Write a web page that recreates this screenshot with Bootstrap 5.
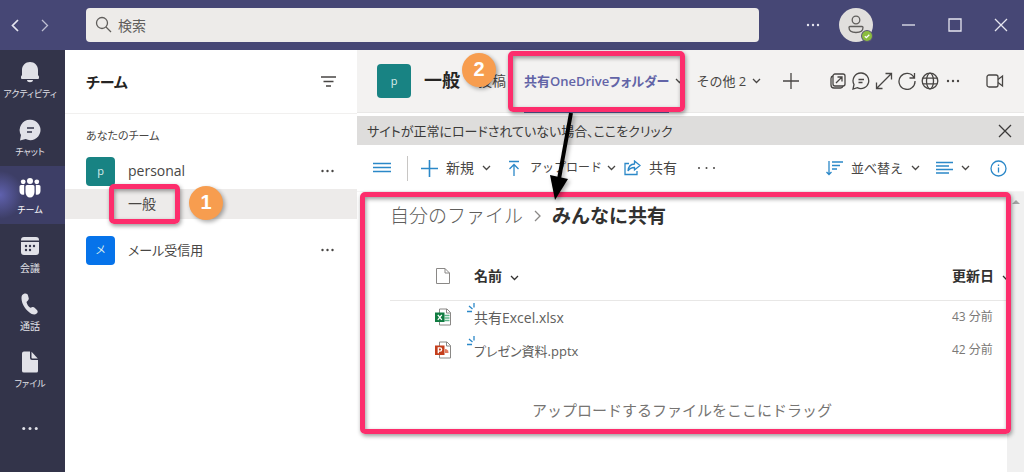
<!DOCTYPE html>
<html lang="ja">
<head>
<meta charset="utf-8">
<meta name="viewport" content="width=device-width, initial-scale=1">
<title>チーム</title>
<link href="https://cdn.jsdelivr.net/npm/bootstrap@5.3.0/dist/css/bootstrap.min.css" rel="stylesheet">
<style>
  body { font-family: "Open Sans", "Noto Sans CJK JP", sans-serif; font-size: 14px; line-height: 20px; color: #484644; background: #fff; font-feature-settings: "palt"; }
  svg { display: block; fill: none; stroke: currentColor; stroke-width: 1.3; flex: none; }
  .plain-btn { border: 0; background: none; padding: 0; color: inherit; display: flex; align-items: center; white-space: nowrap; }
  .dots { fill: currentColor; stroke: none; }
  .text-13 { font-size: 13px; }
  .text-12 { font-size: 12px; }

  .app-top { height: 50px; background: #464775; color: #e6e6f0; padding-left: 8px; }
  .top-btn { width: 30px; height: 30px; justify-content: center; }
  .back-btn { width: 14px; }
  .more-btn { margin-left: 39px; }
  .user-btn { margin: 0 12px 0 10px; }
  .win-btn { width: 46px; height: 50px; justify-content: center; }
  .search-wrap { margin-left: 26px; }
  .search-wrap svg { position: absolute; left: 9px; top: 8px; color: #605e5c; }
  .search-box { height: 34px; border: 0; border-radius: 4px; background: #edebe9; padding: 0 12px 0 32px; font-size: 14px; width: 100%; }
  .search-box::placeholder { color: #605e5c; opacity: 1; }

  .rail { width: 65px; background: #33344a; }
  .rail a { height: 58px; padding: 11px 5px 0 0; color: #e1e1e8; text-decoration: none; font-size: 10px; line-height: 16px; gap: 3px; white-space: nowrap; }
  .rail .kana { font-size: 9px; }
  .rail svg { fill: currentColor; stroke: none; }
  .rail a.active { color: #fff; background: radial-gradient(circle at left, #5f61ae 0, #3d3e66 24px); }

  .side { width: 292px; }
  .side-head { height: 64px; padding: 0 20px 0 21px; border-bottom: 1px solid #f1f0ef; }
  .side-head h1 { font-size: 15px; font-weight: 700; color: #252423; }
  .side-label { font-size: 11px; padding: 12px 21px 10px; }
  .team-row { height: 30px; padding: 0 22px 0 21px; }
  .tile { width: 29px; height: 29px; border-radius: 4px; background: #188383; color: #d8ecec; font-size: 11px; display: flex; align-items: center; justify-content: center; flex: none; }
  .tile-blue { background: #0673ea; }
  .tile-lg { width: 34px; height: 34px; }
  .team-row .tile { margin-right: 13px; }
  .channel { height: 30px; background: #edebea; padding-left: 63px; margin: 3px 0 16px; }
  .channel a, .tabs a { color: inherit; text-decoration: none; white-space: nowrap; }

  .mark-box { position: absolute; border: 5px solid #fd2d6c; border-radius: 5px; box-shadow: 1px 2px 4px #0006, inset 1px 2px 4px #0006; pointer-events: none; z-index: 3; }
  .mark-channel { inset: -10px -24px -10px -19px; }
  .mark-tab { inset: 1px -16px 1px -16px; }
  .mark-files { inset: 0 13px auto 3px; height: 242px; }
  .step { position: absolute; width: 34px; height: 34px; border-radius: 50%; background: #f79d4f; color: #fff; font-family: "Liberation Sans", sans-serif; font-size: 20px; font-weight: 700; line-height: 33px; text-align: center; box-shadow: 2px 2px 4px #0005; z-index: 4; }
  .step-one { left: 61px; top: -8px; }
  .step-two { left: -16px; top: 3px; }
  .pointer { position: absolute; left: 20px; top: 61px; z-index: 5; filter: drop-shadow(2px 2px 2px #0005); }

  .main-head { height: 63px; background: #f3f2f1; padding: 0 19px 0 20px; border-bottom: 1px solid #e9e8e7; }
  .main-head h2 { font-size: 18px; font-weight: 700; color: #252423; margin-left: 13px; }
  .tabs { height: 63px; margin-left: 18px; gap: 18px; }
  .tabs li { display: flex; align-items: center; position: relative; }
  .tabs .current { color: #6264a7; font-weight: 600; font-size: 13px; }
  .tabs .current::after { content: ""; position: absolute; left: 0; right: 0; bottom: 0; height: 2px; background: #6264a7; }
  .tab-menu { margin: 0 12px 0 6px; }
  .tab-more { gap: 6px; margin-right: 22px; }
  .tool-set { gap: 5px; }
  .meet-btn { margin-left: 19px; }
  .notice { height: 29px; background: #dedddc; padding: 0 12px 0 10px; margin-top: 3px; color: #3b3a39; }
  .cmd-bar { height: 47px; padding: 0 17px 0 16px; border-bottom: 1px solid #f5f4f4; }
  .cmd-bar .blue { color: #2b88c8; }
  .cmd-bar button { gap: 8px; }
  .cmd-bar .btn-tight { gap: 5px; }
  .space-16 { margin-left: 16px; }
  .space-20 { margin-left: 20px; }
  .rule-v { width: 1px; height: 25px; background: #c8c6c4; margin: 0 13px 0 16px; }

  .files { padding: 12px 17px 12px 33px; }
  .crumbs { gap: 10px; font-size: 19px; line-height: 24px; font-feature-settings: normal; }
  .crumbs a { color: #605e5c; font-weight: 300; text-decoration: none; }
  .crumbs svg { color: #8a8886; }
  .crumbs strong { color: #323130; }
  .file-table { width: 100%; table-layout: fixed; margin-top: 25px; }
  .file-table th { height: 47px; padding: 0; color: #323130; font-weight: 600; border-bottom: 1px solid #e8e7e6; white-space: nowrap; overflow: hidden; }
  .file-table th .sheet { color: #8a8886; stroke-width: 1; }
  .file-table td { height: 33px; padding: 0; white-space: nowrap; }
  .col-kind { width: 84px; }
  .col-date { width: 55px; }
  .file-table .kind { padding-left: 44px; }
  .file-link { display: inline-block; color: #605e5c; text-decoration: none; padding-top: 2px; }
  .file-link svg { position: absolute; left: -8px; top: -3px; color: #2b88c8; }
  .file-table .date { font-size: 12px; color: #7a7876; }
  .drop-hint { font-size: 15px; color: #767472; text-align: center; margin: 34px 0 0; padding-right: 33px; font-feature-settings: normal; }
  .scroll-track { position: absolute; right: 0; top: 0; bottom: 0; width: 17px; background: #f0f0f0; padding: 8px 0 0 5px; color: #a3a3a3; }
</style>
</head>
<body class="d-flex flex-column min-vh-100">
<svg width="0" height="0" class="position-absolute">
  <symbol id="dots" viewBox="0 0 14 4"><circle cx="2" cy="2" r="1.2"/><circle cx="7" cy="2" r="1.2"/><circle cx="12" cy="2" r="1.2"/></symbol>
  <symbol id="chev" viewBox="0 0 9 6"><path d="M1 1l3.500 3.500L8 1"/></symbol>
</svg>

<header class="app-top d-flex align-items-center">
  <button class="plain-btn top-btn back-btn" aria-label="戻る"><svg width="8" height="13" viewBox="0 0 8 13"><path d="M7 1L1.500 6.500 7 12" stroke-width="1.700"/></svg></button>
  <button class="plain-btn top-btn ms-2" aria-label="進む"><svg class="opacity-75" width="8" height="13" viewBox="0 0 8 13"><path d="M1 1l5.500 5.500L1 12"/></svg></button>
  <label class="search-wrap position-relative flex-grow-1">
    <svg width="17" height="17" viewBox="0 0 17 17"><circle cx="7" cy="7" r="5.500"/><path d="M11 11l5 5"/></svg>
    <input class="search-box" type="search" placeholder="検索" aria-label="検索">
  </label>
  <button class="plain-btn top-btn more-btn" aria-label="設定など"><svg class="dots" width="14" height="4"><use href="#dots"/></svg></button>
  <button class="plain-btn user-btn" aria-label="アカウント">
    <svg width="36" height="36" viewBox="0 0 36 36"><circle cx="18" cy="18" r="17" fill="#e1dfdd" stroke="none"/><g stroke="#605e5c"><circle cx="18" cy="13" r="3.800"/><path d="M12 19.500h12q1 0 1 1c0 3.500-3 5-7 5s-7-1.500-7-5q0-1 1-1z"/></g><circle cx="29" cy="29" r="6" fill="#5b5a73" stroke="none"/><circle cx="29" cy="29" r="5" fill="#8bbd3f" stroke="none"/><path d="M26.800 29.200l1.600 1.500 2.900-3" stroke="#fff"/></svg>
  </button>
  <button class="plain-btn win-btn" aria-label="最小化"><svg width="14" height="14" viewBox="0 0 14 14"><path d="M0 7h13"/></svg></button>
  <button class="plain-btn win-btn" aria-label="最大化"><svg width="14" height="14" viewBox="0 0 14 14"><path d="M1 1h12v12H1z"/></svg></button>
  <button class="plain-btn win-btn" aria-label="閉じる"><svg width="14" height="14" viewBox="0 0 14 14"><path d="M1 1l12 12M13 1L1 13"/></svg></button>
</header>

<div class="d-flex flex-grow-1">
  <nav class="rail d-flex flex-column flex-shrink-0">
    <a href="#" class="kana d-flex flex-column align-items-center"><svg width="22" height="22" viewBox="0 0 22 22"><path d="M2 17v-1.500l1-1.500V9c0-4.500 3.500-8 8-8s8 3.500 8 8v5l1 1.500V17q0 1-1 1H3q-1 0-1-1zM8 19h6c0 1.500-1.500 2.200-3 2.200S8 20.500 8 19z"/></svg>アクティビティ</a>
    <a href="#" class="kana d-flex flex-column align-items-center"><svg width="22" height="22" viewBox="0 0 22 22"><path d="M11.300.8a10.200 10.200 0 1 1-4.600 19.300L1 21.500l1-5.500A10.200 10.200 0 0 1 11.300.8z"/><path d="M8 9h7M8 13h5" stroke="#33344a" stroke-width="1.500"/></svg>チャット</a>
    <a href="#" class="kana active d-flex flex-column align-items-center"><svg width="22" height="22" viewBox="0 0 22 22"><circle cx="11" cy="4" r="3"/><circle cx="4.200" cy="4.800" r="2.400"/><circle cx="17.800" cy="4.800" r="2.400"/><path d="M6.500 9.500q0-1.500 1.500-1.500h6q1.500 0 1.500 1.500V15a4.500 5.500 0 0 1-9 0zM.500 9.500Q.500 8 2 8h3.200v9.500C3 18.500.500 17 .500 14zM21.500 9.500Q21.500 8 20 8h-3.200v9.500c2.200 1 4.700-.500 4.700-3.500z"/></svg>チーム</a>
    <a href="#" class="d-flex flex-column align-items-center"><svg width="22" height="22" viewBox="0 0 22 22"><path d="M2 5q0-3 3-3h12q3 0 3 3v.500H2zM2 7h18v10q0 3-3 3H5q-3 0-3-3z"/><g fill="#33344a"><circle cx="7" cy="11" r="1.200"/><circle cx="11" cy="11" r="1.200"/><circle cx="15" cy="11" r="1.200"/><circle cx="7" cy="15" r="1.200"/><circle cx="11" cy="15" r="1.200"/></g></svg>会議</a>
    <a href="#" class="d-flex flex-column align-items-center"><svg width="22" height="22" viewBox="0 0 22 22"><path d="M5 .800c2-.800 3.500 0 4 1.600l.700 2.600c.3 1.200-.2 2-1 2.700L7.500 9c.5 2.500 2 4.700 3.800 5.800l1.600-.600c1.200-.400 2.200 0 3 .700l2 2c1.100 1.200 1 2.600-.2 3.600-2 1.600-4.700 1-7.500-1.300C5.500 15.500 2.700 10.500 2.500 5.500 2.400 3 3 1.600 5 .800z"/></svg>通話</a>
    <a href="#" class="kana d-flex flex-column align-items-center"><svg width="22" height="22" viewBox="0 0 22 22"><path d="M5 .500h6V7q0 2 2 2h6v11q0 1.500-1.500 1.500H5Q3 21.500 3 20V2.500q0-2 2-2z"/><path d="M12.500.800L18.800 7.500h-5.300q-1 0-1-1z"/></svg>ファイル</a>
    <a href="#" class="d-flex flex-column align-items-center pt-4" aria-label="その他"><svg class="mt-1" width="18" height="5"><use href="#dots"/></svg></a>
  </nav>

  <aside class="side flex-shrink-0">
    <div class="side-head d-flex align-items-center justify-content-between">
      <h1 class="m-0">チーム</h1>
      <button class="plain-btn" aria-label="フィルター"><svg width="18" height="14" viewBox="0 0 18 14"><path d="M2 2h15M4.500 6.500h10M7 11h5"/></svg></button>
    </div>
    <div class="side-label">あなたのチーム</div>
    <div class="team-row d-flex align-items-center"><span class="tile">p</span>personal
      <button class="plain-btn ms-auto" aria-label="personal のその他"><svg class="dots" width="15" height="4"><use href="#dots"/></svg></button></div>
    <div class="channel d-flex align-items-center">
      <span class="position-relative"><a href="#">一般</a><span class="mark-box mark-channel"></span><span class="step step-one">1</span></span>
    </div>
    <div class="team-row d-flex align-items-center text-13"><span class="tile tile-blue">メ</span>メール受信用
      <button class="plain-btn ms-auto" aria-label="メール受信用のその他"><svg class="dots" width="15" height="4"><use href="#dots"/></svg></button></div>
  </aside>

  <main class="flex-grow-1 d-flex flex-column">
    <div class="main-head d-flex align-items-center">
      <span class="tile tile-lg">p</span>
      <h2 class="mb-0 text-nowrap">一般</h2>
      <ul class="tabs list-unstyled d-flex mb-0">
        <li><a href="#">投稿</a><span class="step step-two">2</span></li>
        <li class="current"><a href="#">共有OneDriveフォルダー</a>
          <span class="mark-box mark-tab"></span>
          <svg class="pointer" width="40" height="90" viewBox="0 0 40 90"><path d="M27 2L15 68" stroke="#000" stroke-width="4"/><path d="M11 89L6 64l18 4z" fill="#000" stroke="none"/></svg></li>
      </ul>
      <button class="plain-btn tab-menu" aria-label="タブのメニュー"><svg width="9" height="6"><use href="#chev"/></svg></button>
      <button class="plain-btn tab-more text-13">その他 2<svg width="9" height="6"><use href="#chev"/></svg></button>
      <button class="plain-btn" aria-label="タブを追加"><svg width="16" height="16" viewBox="0 0 16 16"><path d="M8 0v16M0 8h16"/></svg></button>
      <div class="tool-set d-flex align-items-center ms-auto">
        <button class="plain-btn" aria-label="ポップアウト"><svg width="18" height="18" viewBox="0 0 18 18"><rect x="4" y="2" width="12" height="12" rx="2"/><path d="M4 4Q2 4.500 2 6.500V13q0 3 3 3h6.500q2 0 2.500-2M7 11l6-6M8.500 5H13v4.500"/></svg></button>
        <button class="plain-btn" aria-label="会話"><svg width="18" height="18" viewBox="0 0 18 18"><path d="M9.300 1a7.800 7.800 0 1 1-4 14.700L1 17l1-4.500A7.800 7.800 0 0 1 9.300 1zM6.500 7.500H12M6.500 10.500h4"/></svg></button>
        <button class="plain-btn" aria-label="展開"><svg width="18" height="18" viewBox="0 0 18 18"><path d="M2 16L16 2M10.500 1.500h6v6M1.500 10.500v6h6"/></svg></button>
        <button class="plain-btn" aria-label="再読み込み"><svg width="18" height="18" viewBox="0 0 18 18"><path d="M16 5.500A8 8 0 1 0 17 9M16.500 1v5h-5"/></svg></button>
        <button class="plain-btn" aria-label="Web サイト"><svg width="18" height="18" viewBox="0 0 18 18"><circle cx="9" cy="9" r="7.800"/><ellipse cx="9" cy="9" rx="3.500" ry="7.800"/><path d="M2 6.200h14M2 11.800h14"/></svg></button>
        <button class="plain-btn" aria-label="その他"><svg class="dots" width="18" height="4"><use href="#dots"/></svg></button>
        <button class="plain-btn meet-btn" aria-label="会議"><svg width="19" height="16" viewBox="0 0 19 16"><rect x="1" y="2" width="11" height="12" rx="2"/><path d="M12 6.500L16.500 3v10L12 9.500"/></svg></button>
      </div>
    </div>

    <div class="notice d-flex align-items-center justify-content-between">
      <span class="text-13">サイトが正常にロードされていない場合、ここをクリック</span>
      <button class="plain-btn" aria-label="閉じる"><svg width="14" height="14" viewBox="0 0 14 14"><path d="M1 1l12 12M13 1L1 13"/></svg></button>
    </div>

    <div class="cmd-bar d-flex align-items-center">
      <button class="plain-btn" aria-label="メニュー"><svg class="blue" width="18" height="12" viewBox="0 0 18 12"><path d="M0 1.500h18M0 5.500h18M0 9.500h18"/></svg></button>
      <span class="rule-v"></span>
      <button class="plain-btn"><svg class="blue" width="17" height="17" viewBox="0 0 17 17"><path d="M8.500 0v17M0 8.500h17" stroke-width="1.600"/></svg>新規<svg width="9" height="6"><use href="#chev"/></svg></button>
      <button class="plain-btn btn-tight space-16 text-12"><svg class="blue me-1" width="14" height="17" viewBox="0 0 14 17"><path d="M2 1.500h10M7 16V4.500M2.500 9L7 4.500 11.500 9"/></svg>アップロード<svg width="9" height="6"><use href="#chev"/></svg></button>
      <button class="plain-btn ms-2"><svg class="blue" width="17" height="16" viewBox="0 0 17 16"><path d="M5 3.500H1v11h12V11M10.500 1l5.500 4.500-5.500 4.500V7.500C7.500 7.500 5.500 8.500 4 11c.3-4 2.500-6.800 6.500-7z"/></svg>共有</button>
      <button class="plain-btn space-20" aria-label="その他のコマンド"><svg class="dots" width="19" height="4" viewBox="0 0 19 4"><circle cx="2" cy="2" r="1"/><circle cx="9.500" cy="2" r="1"/><circle cx="17" cy="2" r="1"/></svg></button>
      <button class="plain-btn ms-auto text-13"><svg class="blue" width="17" height="16" viewBox="0 0 17 16"><path d="M3 1v14M.500 12L3 14.500 5.500 12M6 2h11M6 5.500h8M6 9h5"/></svg>並べ替え<svg width="9" height="6"><use href="#chev"/></svg></button>
      <button class="plain-btn space-16" aria-label="表示の切り替え"><svg class="blue" width="17" height="14" viewBox="0 0 17 14"><path d="M0 1.500h17M0 5h13M0 8.500h17M0 12h13"/></svg><svg width="9" height="6"><use href="#chev"/></svg></button>
      <button class="plain-btn space-20" aria-label="情報"><svg class="blue" width="17" height="17" viewBox="0 0 17 17"><circle cx="8.500" cy="8.500" r="7.500"/><path d="M8.500 7.500v5M8.500 4.500v1.500"/></svg></button>
    </div>

    <div class="position-relative flex-grow-1">
      <section class="files">
        <nav class="crumbs d-flex align-items-center"><a href="#">自分のファイル</a><svg width="9" height="12" viewBox="0 0 9 12"><path d="M2 1l5 5-5 5"/></svg><strong>みんなに共有</strong></nav>
        <table class="file-table">
          <colgroup><col class="col-kind"><col><col class="col-date"></colgroup>
          <thead><tr>
            <th class="kind"><svg class="sheet" width="18" height="18" viewBox="0 0 18 18"><path d="M2.500 1.500h8.500L15.500 6v10.500h-13zM11 1.500V6h4.500"/></svg></th>
            <th>名前<svg class="d-inline-block ms-2" width="9" height="6"><use href="#chev"/></svg></th>
            <th>更新日<svg class="d-inline-block ms-2" width="9" height="6"><use href="#chev"/></svg></th>
          </tr></thead>
          <tbody>
            <tr>
              <td class="kind"><svg width="18" height="18" viewBox="0 0 18 18"><path d="M5.500 1h7.500L16.500 4.500V17h-11zM12.500 1v4h4" stroke="#8a8886" stroke-width="1" fill="#fff"/><path d="M10.500 7.500h5M10.500 10h5M10.500 12.500h5" stroke="#5fb58a"/><rect x="1" y="4.500" width="9.500" height="9.500" fill="#107c41" stroke="none"/><path d="M3.800 6.800l4 5M7.800 6.800l-4 5" stroke="#fff"/></svg></td>
              <td><a href="#" class="file-link position-relative"><svg width="10" height="10" viewBox="0 0 10 10"><path d="M1 8.500h5M3 3l3.500 3M8 0v4.500"/></svg>共有Excel.xlsx</a></td>
              <td class="date">43 分前</td>
            </tr>
            <tr>
              <td class="kind"><svg width="18" height="18" viewBox="0 0 18 18"><path d="M5.500 1h7.500L16.500 4.500V17h-11zM12.500 1v4h4" stroke="#8a8886" stroke-width="1" fill="#fff"/><path d="M11 8v4h3.500A3.500 3.500 0 0 0 11 8z" fill="#e07a5f" stroke="none"/><rect x="1" y="4.500" width="9.500" height="9.500" fill="#c43e1c" stroke="none"/><path d="M4.300 12.200V6.800H6a1.600 1.600 0 0 1 0 3.300H4.300" stroke="#fff"/></svg></td>
              <td><a href="#" class="file-link position-relative text-13"><svg width="10" height="10" viewBox="0 0 10 10"><path d="M1 8.500h5M3 3l3.500 3M8 0v4.500"/></svg>プレゼン資料.pptx</a></td>
              <td class="date">42 分前</td>
            </tr>
          </tbody>
        </table>
        <p class="drop-hint">アップロードするファイルをここにドラッグ</p>
      </section>
      <div class="scroll-track"><svg width="8" height="4" viewBox="0 0 8 4"><path d="M0 4l4-4 4 4z" fill="currentColor" stroke="none"/></svg></div>
      <div class="mark-box mark-files"></div>
    </div>
  </main>
</div>
<script src="https://cdn.jsdelivr.net/npm/bootstrap@5.3.0/dist/js/bootstrap.bundle.min.js"></script>
</body>
</html>
